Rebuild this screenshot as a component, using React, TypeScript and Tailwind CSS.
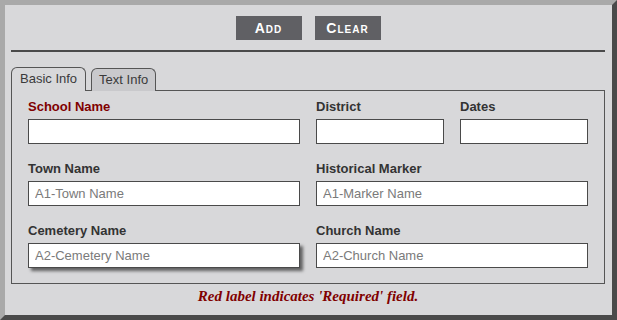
import React from "react";

function Field({
  label,
  placeholder,
  required,
  shadow,
}: {
  label: string;
  placeholder?: string;
  required?: boolean;
  shadow?: boolean;
}) {
  return (
    <div className="flex flex-col">
      <label
        className={
          required
            ? "block h-[15px] leading-[15px] text-[13px] font-bold text-[#800000] mb-[5px]"
            : "block h-[15px] leading-[15px] text-[13px] font-bold text-[#333333] mb-[5px]"
        }
      >
        {label}
      </label>
      <input
        type="text"
        placeholder={placeholder}
        className={
          "h-[25px] w-full border border-[#4a4a4a] bg-white px-[6px] text-[13px] text-[#333] placeholder:text-[#7a7a7a] outline-none" +
          (shadow ? " shadow-[3px_3px_3px_rgba(0,0,0,0.55)]" : "")
        }
      />
    </div>
  );
}

export default function App() {
  return (
    <div className="w-[617px] h-[320px] flex flex-col bg-[#d8d8da] border-[5px] border-solid border-t-[#a9a9a9] border-l-[#a9a9a9] border-r-[#4a4a4a] border-b-[#4a4a4a] pl-[6px] pr-[7px] pt-[11px] pb-[10px] font-['Liberation_Sans',Arial,sans-serif]">
      {/* Action buttons */}
      <div className="flex justify-center gap-[13px]">
        <button className="w-[66px] h-[24px] bg-[#606064] text-white text-[14px] font-bold tracking-[1px] [font-variant:small-caps]">
          Add
        </button>
        <button className="w-[66px] h-[24px] bg-[#606064] text-white text-[14px] font-bold tracking-[1px] [font-variant:small-caps]">
          Clear
        </button>
      </div>

      <div className="h-[2px] bg-[#4a4a4a] mt-[10px]" />

      {/* Tabs */}
      <div className="flex items-end gap-[5px] mt-[15px] -mb-px relative z-10">
        <div className="h-[24px] px-[8px] pt-[2px] border border-b-0 border-[#555] rounded-t-[6px] bg-[#d8d8da] text-[13px] leading-[17px] text-[#3a3a3a]">
          Basic Info
        </div>
        <div className="h-[23px] px-[7px] pt-[2px] border border-b-0 border-[#555] rounded-t-[6px] bg-[#c9c9cc] text-[13px] leading-[17px] text-[#3a3a3a]">
          Text Info
        </div>
      </div>

      {/* Panel */}
      <div className="border border-[#555] px-[16px] pt-[8px] pb-[15px] grid grid-cols-2 gap-x-[16px] gap-y-[17px]">
        <Field label="School Name" required />
        <div className="grid grid-cols-2 gap-x-[16px]">
          <Field label="District" />
          <Field label="Dates" />
        </div>
        <Field label="Town Name" placeholder="A1-Town Name" />
        <Field label="Historical Marker" placeholder="A1-Marker Name" />
        <Field label="Cemetery Name" placeholder="A2-Cemetery Name" shadow />
        <Field label="Church Name" placeholder="A2-Church Name" />
      </div>

      <p className="mt-[4px] text-center text-[15px] leading-[17px] italic font-bold text-[#800000] font-['Liberation_Serif','Times_New_Roman',serif]">
        Red label indicates 'Required' field.
      </p>
    </div>
  );
}
